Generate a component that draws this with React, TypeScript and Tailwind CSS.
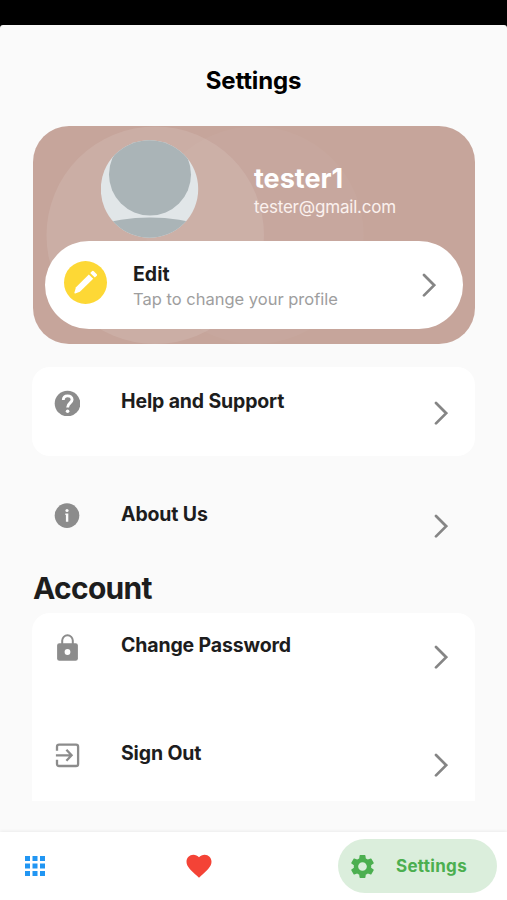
import { ReactNode } from "react"
import { MdApps, MdFavorite, MdSettings } from "react-icons/md"

interface SettingsRowProps {
	icon: ReactNode
	title: string
}

function Chevron() {
	return (
		<svg className="h-6 w-[14px] shrink-0 text-[#858585]" viewBox="0 0 14 24" fill="none" stroke="currentColor" strokeWidth="2.7" strokeLinecap="round" strokeLinejoin="miter">
			<path d="M2 2 12.2 12.2 2 22.4" />
		</svg>
	)
}

function HelpIcon() {
	return (
		<svg className="h-[26px] w-[26px]" viewBox="0 0 26 26" fill="none">
			<circle cx="13.5" cy="13.5" r="12.8" fill="#8c8c8c" />
			<path d="M9.3 10.1C9.3 7.5 11 5.9 13.6 5.9S18.1 7.4 18.1 9.8C18.1 12.8 13.6 13.2 13.6 17.4" stroke="#fff" strokeWidth="2.9" />
			<circle cx="13.6" cy="21.3" r="1.8" fill="#fff" />
		</svg>
	)
}

function InfoIcon() {
	return (
		<svg className="h-[26px] w-[26px]" viewBox="0 0 26 26">
			<circle cx="13" cy="12.6" r="12.3" fill="#8c8c8c" />
			<circle cx="13" cy="7.5" r="1.6" fill="#fafafa" />
			<path d="M11.3 10.5H14.3V18.8H11.9V12H11.3Z" fill="#fafafa" />
		</svg>
	)
}

function LockIcon() {
	return (
		<svg className="h-[27px] w-[26px]" viewBox="0 0 26 27" fill="none">
			<path d="M8.2 10V6.6a5.3 5.3 0 0 1 10.6 0V10" stroke="#8c8c8c" strokeWidth="2" />
			<rect x="3.1" y="9.3" width="20.8" height="17.4" rx="2.3" fill="#8c8c8c" />
			<circle cx="13.5" cy="18" r="2.9" fill="#fff" />
		</svg>
	)
}

function SignOutIcon() {
	return (
		<svg className="h-[26px] w-[26px]" viewBox="0 0 26 26" fill="none" stroke="#8c8c8c" strokeWidth="2.3">
			<path d="M3 8.7V4.8Q3 2.7 5.1 2.7H22Q24.1 2.7 24.1 4.8V21.9Q24.1 24 22 24H5.1Q3 24 3 21.9V17.8" />
			<path d="M1.9 13.3H17.3M12.4 7.8 17.6 13.3 12.4 18.8" />
		</svg>
	)
}

function PencilIcon() {
	return (
		<svg className="h-6 w-6" viewBox="0 0 24 24" fill="#fff">
			<path d="M14.8 4.4 19.2 8.8 5.9 21.8 1.2 23.6Q.1 23.7.4 22.6L2 17.2Z" />
			<path d="M16.2 3 18.2 1.1Q19 .4 19.8 1.2L22.8 4.2Q23.5 5 22.8 5.7L20.8 7.5Z" />
		</svg>
	)
}

function SettingsRow({ icon, title }: SettingsRowProps) {
	return (
		<div className="flex h-[88px] items-start pl-[21px] pr-[26px]">
			<div className="flex h-[72px] w-[26px] shrink-0 items-center">{icon}</div>
			<div className="ml-[41px] flex-1 pt-5 text-[19.5px] leading-7 font-bold tracking-[-0.15px]">{title}</div>
			<div className="pt-[33.5px]">
				<Chevron />
			</div>
		</div>
	)
}

function Avatar() {
	return (
		<svg className="h-[98px] w-[98px] shrink-0" viewBox="0 0 98 98">
			<defs>
				<clipPath id="avatar">
					<circle cx="48.5" cy="49" r="48.7" />
				</clipPath>
			</defs>
			<g clipPath="url(#avatar)">
				<rect width="98" height="98" fill="#e1e6e8" />
				<circle cx="49" cy="34.5" r="41" fill="#aab4b7" />
				<ellipse cx="49" cy="106" rx="76" ry="28.5" fill="#aab4b7" />
			</g>
		</svg>
	)
}

function ProfileCard() {
	return (
		<div className="relative h-[218.5px] w-[442px] overflow-hidden rounded-[36px] bg-[#c6a59b] pt-[14.5px]">
			<svg className="absolute inset-0 h-full w-full" viewBox="0 0 442 219">
				<circle cx="222" cy="109.5" r="109" fill="#fff" fillOpacity="0.03" />
				<circle cx="122" cy="109.5" r="109" fill="#fff" fillOpacity="0.1" />
			</svg>
			<div className="relative flex h-[101px] pl-[68px]">
				<Avatar />
				<div className="ml-[55px] pt-[23px] text-white">
					<p className="text-[27px] leading-8 font-bold">tester1</p>
					<p className="text-[17px] leading-6 tracking-[-0.2px] text-[#fbf1ee]">tester@gmail.com</p>
				</div>
			</div>
			<div className="relative mx-3 flex h-[88px] items-start rounded-full bg-white pl-[19px] pr-[27px]">
				<div className="mt-[19.5px] flex h-[43px] w-[43px] items-center justify-center rounded-full bg-[#fdd835]">
					<PencilIcon />
				</div>
				<div className="ml-[26px] flex-1 pt-[18.5px]">
					<p className="text-[19.5px] leading-7 font-bold">Edit</p>
					<p className="text-[16.5px] leading-[23px] text-[#9e9e9e]">Tap to change your profile</p>
				</div>
				<div className="pt-8">
					<Chevron />
				</div>
			</div>
		</div>
	)
}

function BottomNav() {
	return (
		<nav className="flex h-[68px] items-center bg-white pl-5 pr-[10px] shadow-[0_-1px_3px_rgba(0,0,0,0.06)]">
			<MdApps className="text-[#2196f3]" size={30} />
			<MdFavorite className="ml-[134px] text-[#f44336]" size={30} />
			<div className="ml-auto flex h-[54px] w-[159px] items-center rounded-full bg-[#dbeedc] pl-[10px] text-[#4caf50]">
				<MdSettings size={29} />
				<span className="ml-[19px] pt-0.5 text-[17px] font-bold tracking-[0.3px]">Settings</span>
			</div>
		</nav>
	)
}

export default function App() {
	return (
		<div className="flex h-[900px] w-[507px] flex-col overflow-hidden bg-black font-['Inter',sans-serif] text-[#1d1d1d]">
			<div className="h-[25px] shrink-0 bg-black"></div>
			<div className="flex min-h-0 flex-1 flex-col rounded-t-[3px] bg-[#fafafa]">
				<h1 className="pt-[39px] text-center text-[24px] leading-[34px] font-bold tracking-[-0.15px] text-black">Settings</h1>
				<main className="flex-1 px-[33px] pt-[27.5px]">
					<ProfileCard />
					<section className="mt-[23px] -mx-px rounded-[18px] bg-white px-px pb-px">
						<SettingsRow icon={<HelpIcon />} title="Help and Support" />
					</section>
					<div className="mt-[24px]">
						<SettingsRow icon={<InfoIcon />} title="About Us" />
					</div>
					<h2 className="mt-0.5 text-[30px] leading-9 font-bold tracking-[-0.7px]">Account</h2>
					<section className="mt-[7px] -mx-px flex h-[188px] flex-col gap-5 rounded-t-[18px] bg-white px-px">
						<div className="-mt-0.5">
							<SettingsRow icon={<LockIcon />} title="Change Password" />
						</div>
						<SettingsRow icon={<SignOutIcon />} title="Sign Out" />
					</section>
				</main>
				<BottomNav />
			</div>
		</div>
	)
}
